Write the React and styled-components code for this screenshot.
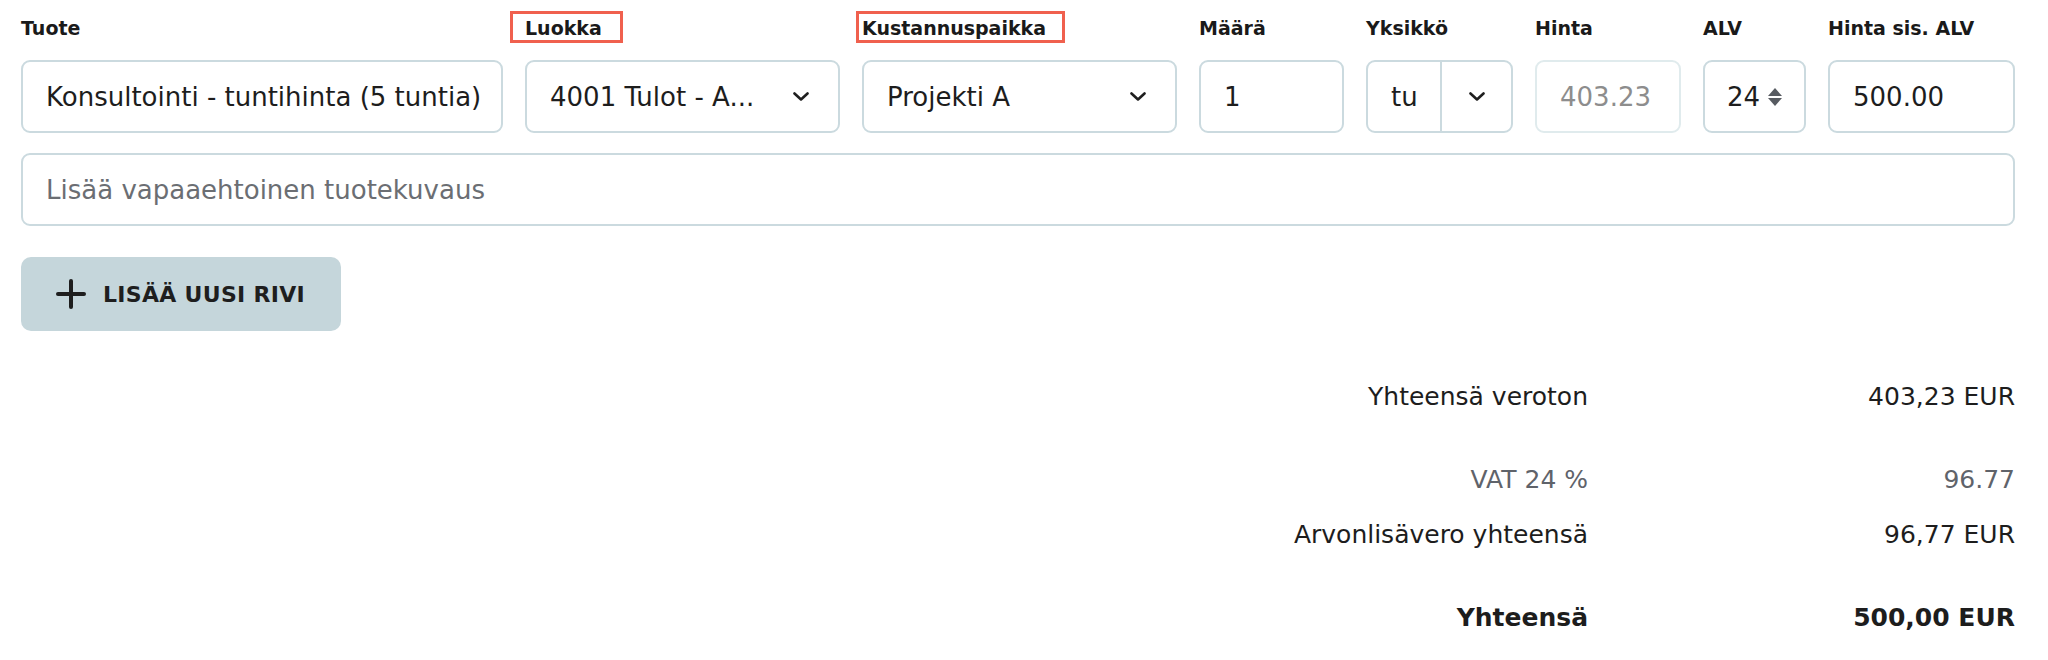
import React from "react";
import styled, { createGlobalStyle } from "styled-components";

const GlobalStyle = createGlobalStyle`
  body {
    margin: 0;
    background: #ffffff;
  }
`;

const Page = styled.div`
  width: 1994px;
  padding: 16px 33px 0 21px;
  font-family: "DejaVu Sans", "Open Sans", sans-serif;
  color: #1d1d1d;
`;

const FieldsRow = styled.div`
  display: grid;
  grid-template-columns: 482px 315px 315px 145px 147px 146px 103px 187px;
  column-gap: 22px;
`;

const Field = styled.div`
  display: flex;
  flex-direction: column;
  gap: 20px;
`;

const Label = styled.div`
  position: relative;
  height: 24px;
  font-size: 19px;
  line-height: 24px;
  font-weight: 700;
  color: #1a1a1a;
  white-space: nowrap;
`;

const Annotation = styled.span`
  position: absolute;
  top: -5px;
  left: ${(p) => p.$left}px;
  width: ${(p) => p.$width}px;
  height: 32px;
  box-sizing: border-box;
  border: 3px solid #f0604e;
  pointer-events: none;
`;

const Box = styled.div`
  height: 73px;
  box-sizing: border-box;
  border: 2px solid ${(p) => (p.$disabled ? "#e0ebed" : "#cbdadf")};
  border-radius: 9px;
  background: #ffffff;
  display: flex;
  align-items: center;
  justify-content: space-between;
  padding: 0 ${(p) => p.$padRight || 0}px 0 ${(p) => p.$padLeft ?? 23}px;
  font-size: 26px;
  line-height: 32px;
  color: ${(p) => (p.$disabled ? "#8d8d8d" : "#1d1d1d")};
  white-space: nowrap;
  overflow: hidden;
`;

const UnitValue = styled.div`
  width: 72px;
  height: 100%;
  box-sizing: border-box;
  padding-left: 23px;
  display: flex;
  align-items: center;
`;

const UnitToggle = styled.div`
  flex: 1;
  height: 100%;
  border-left: 2px solid #cbdadf;
  display: flex;
  align-items: center;
  justify-content: center;
`;

const Spin = styled.div`
  display: flex;
  align-items: center;
  gap: 8px;
`;

const Description = styled(Box)`
  margin-top: 20px;
  color: #6b6e73;
`;

const AddButton = styled.button`
  margin-top: 31px;
  width: 320px;
  height: 74px;
  border: none;
  border-radius: 10px;
  background: #c5d6db;
  display: flex;
  align-items: center;
  gap: 17px;
  padding: 0 0 0 35px;
  font-family: inherit;
  font-size: 22px;
  font-weight: 700;
  letter-spacing: 0.3px;
  text-transform: uppercase;
  color: #1e1e1e;
  cursor: pointer;
`;

const Totals = styled.div`
  margin-top: 50px;
  display: flex;
  flex-direction: column;
  gap: 51px;
`;

const TotalsGroup = styled.div`
  display: flex;
  flex-direction: column;
  gap: 23px;
`;

const TotalRow = styled.div`
  display: grid;
  grid-template-columns: 1fr 427px;
  font-size: 25px;
  line-height: 32px;
  text-align: right;
  font-weight: ${(p) => (p.$strong ? 700 : 400)};
  color: ${(p) => (p.$muted ? "#5f636a" : "#1d1d1d")};
`;

function Chevron() {
  return (
    <svg width="16" height="9" viewBox="0 0 16 9" fill="none">
      <polyline
        points="1.5,1.5 8,7.5 14.5,1.5"
        stroke="#1f1f1f"
        strokeWidth="2.6"
        strokeLinecap="round"
        strokeLinejoin="round"
      />
    </svg>
  );
}

function Stepper() {
  return (
    <svg width="14" height="18" viewBox="0 0 14 18">
      <polygon points="7,0 14,8 0,8" fill="#575b61" />
      <polygon points="0,10 14,10 7,18" fill="#575b61" />
    </svg>
  );
}

function Plus() {
  return (
    <svg width="30" height="30" viewBox="0 0 30 30">
      <line x1="15" y1="2" x2="15" y2="28" stroke="#1e1e1e" strokeWidth="4" strokeLinecap="round" />
      <line x1="2" y1="15" x2="28" y2="15" stroke="#1e1e1e" strokeWidth="4" strokeLinecap="round" />
    </svg>
  );
}

const totals = [
  [{ label: "Yhteensä veroton", value: "403,23 EUR" }],
  [
    { label: "VAT 24 %", value: "96.77", muted: true },
    { label: "Arvonlisävero yhteensä", value: "96,77 EUR" },
  ],
  [{ label: "Yhteensä", value: "500,00 EUR", strong: true }],
];

export default function App() {
  return (
    <Page>
      <GlobalStyle />
      <FieldsRow>
        <Field>
          <Label>Tuote</Label>
          <Box>Konsultointi - tuntihinta (5 tuntia)</Box>
        </Field>
        <Field>
          <Label>
            <Annotation $left={-15} $width={113} />
            Luokka
          </Label>
          <Box $padRight={29}>
            <span>4001 Tulot - A...</span>
            <Chevron />
          </Box>
        </Field>
        <Field>
          <Label>
            <Annotation $left={-6} $width={209} />
            Kustannuspaikka
          </Label>
          <Box $padRight={29}>
            <span>Projekti A</span>
            <Chevron />
          </Box>
        </Field>
        <Field>
          <Label>Määrä</Label>
          <Box>1</Box>
        </Field>
        <Field>
          <Label>Yksikkö</Label>
          <Box $padLeft={0}>
            <UnitValue>tu</UnitValue>
            <UnitToggle>
              <Chevron />
            </UnitToggle>
          </Box>
        </Field>
        <Field>
          <Label>Hinta</Label>
          <Box $disabled>403.23</Box>
        </Field>
        <Field>
          <Label>ALV</Label>
          <Box $padLeft={22}>
            <Spin>
              <span>24</span>
              <Stepper />
            </Spin>
          </Box>
        </Field>
        <Field>
          <Label>Hinta sis. ALV</Label>
          <Box>500.00</Box>
        </Field>
      </FieldsRow>

      <Description>Lisää vapaaehtoinen tuotekuvaus</Description>

      <AddButton type="button">
        <Plus />
        Lisää uusi rivi
      </AddButton>

      <Totals>
        {totals.map((group, i) => (
          <TotalsGroup key={i}>
            {group.map((row) => (
              <TotalRow key={row.label} $muted={row.muted} $strong={row.strong}>
                <span>{row.label}</span>
                <span>{row.value}</span>
              </TotalRow>
            ))}
          </TotalsGroup>
        ))}
      </Totals>
    </Page>
  );
}
